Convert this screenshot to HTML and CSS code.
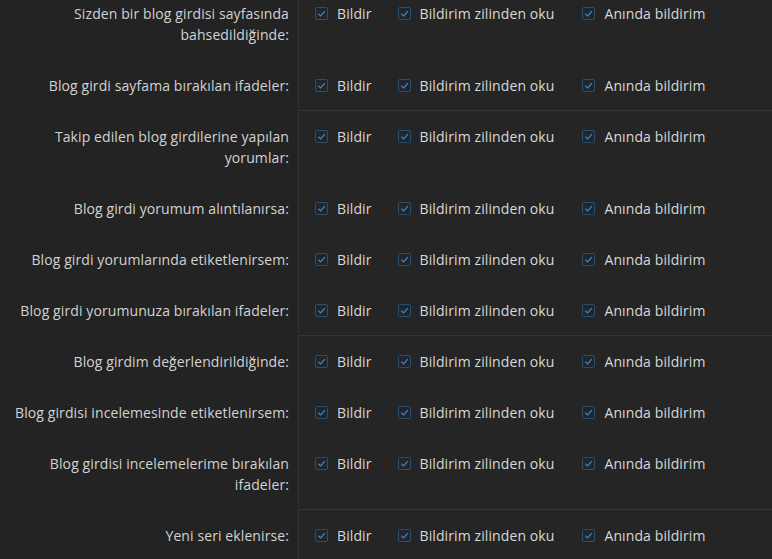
FILE: index.html
```html
<!DOCTYPE html>
<html lang="tr">
<head>
<meta charset="utf-8">
<link rel="stylesheet" href="styles.css">
</head>
<body>
<div class="form">
  <div class="group">
    <div class="row"><div class="label">Sizden bir blog girdisi sayfasında bahsedildiğinde:</div><div class="opts"><span class="opt"><svg class="cb" viewBox="0 0 14 14"><rect x="0.5" y="0.5" width="13" height="13" rx="1.5"/><path d="M3.5 7.2 L6 9.6 L10.6 4.4"/></svg>Bildir</span><span class="opt"><svg class="cb" viewBox="0 0 14 14"><rect x="0.5" y="0.5" width="13" height="13" rx="1.5"/><path d="M3.5 7.2 L6 9.6 L10.6 4.4"/></svg>Bildirim zilinden oku</span><span class="opt"><svg class="cb" viewBox="0 0 14 14"><rect x="0.5" y="0.5" width="13" height="13" rx="1.5"/><path d="M3.5 7.2 L6 9.6 L10.6 4.4"/></svg>Anında bildirim</span></div></div>
    <div class="row"><div class="label">Blog girdi sayfama bırakılan ifadeler:</div><div class="opts"><span class="opt"><svg class="cb" viewBox="0 0 14 14"><rect x="0.5" y="0.5" width="13" height="13" rx="1.5"/><path d="M3.5 7.2 L6 9.6 L10.6 4.4"/></svg>Bildir</span><span class="opt"><svg class="cb" viewBox="0 0 14 14"><rect x="0.5" y="0.5" width="13" height="13" rx="1.5"/><path d="M3.5 7.2 L6 9.6 L10.6 4.4"/></svg>Bildirim zilinden oku</span><span class="opt"><svg class="cb" viewBox="0 0 14 14"><rect x="0.5" y="0.5" width="13" height="13" rx="1.5"/><path d="M3.5 7.2 L6 9.6 L10.6 4.4"/></svg>Anında bildirim</span></div></div>
  </div>
  <div class="group">
    <div class="row"><div class="label">Takip edilen blog girdilerine yapılan yorumlar:</div><div class="opts"><span class="opt"><svg class="cb" viewBox="0 0 14 14"><rect x="0.5" y="0.5" width="13" height="13" rx="1.5"/><path d="M3.5 7.2 L6 9.6 L10.6 4.4"/></svg>Bildir</span><span class="opt"><svg class="cb" viewBox="0 0 14 14"><rect x="0.5" y="0.5" width="13" height="13" rx="1.5"/><path d="M3.5 7.2 L6 9.6 L10.6 4.4"/></svg>Bildirim zilinden oku</span><span class="opt"><svg class="cb" viewBox="0 0 14 14"><rect x="0.5" y="0.5" width="13" height="13" rx="1.5"/><path d="M3.5 7.2 L6 9.6 L10.6 4.4"/></svg>Anında bildirim</span></div></div>
    <div class="row"><div class="label">Blog girdi yorumum alıntılanırsa:</div><div class="opts"><span class="opt"><svg class="cb" viewBox="0 0 14 14"><rect x="0.5" y="0.5" width="13" height="13" rx="1.5"/><path d="M3.5 7.2 L6 9.6 L10.6 4.4"/></svg>Bildir</span><span class="opt"><svg class="cb" viewBox="0 0 14 14"><rect x="0.5" y="0.5" width="13" height="13" rx="1.5"/><path d="M3.5 7.2 L6 9.6 L10.6 4.4"/></svg>Bildirim zilinden oku</span><span class="opt"><svg class="cb" viewBox="0 0 14 14"><rect x="0.5" y="0.5" width="13" height="13" rx="1.5"/><path d="M3.5 7.2 L6 9.6 L10.6 4.4"/></svg>Anında bildirim</span></div></div>
    <div class="row"><div class="label">Blog girdi yorumlarında etiketlenirsem:</div><div class="opts"><span class="opt"><svg class="cb" viewBox="0 0 14 14"><rect x="0.5" y="0.5" width="13" height="13" rx="1.5"/><path d="M3.5 7.2 L6 9.6 L10.6 4.4"/></svg>Bildir</span><span class="opt"><svg class="cb" viewBox="0 0 14 14"><rect x="0.5" y="0.5" width="13" height="13" rx="1.5"/><path d="M3.5 7.2 L6 9.6 L10.6 4.4"/></svg>Bildirim zilinden oku</span><span class="opt"><svg class="cb" viewBox="0 0 14 14"><rect x="0.5" y="0.5" width="13" height="13" rx="1.5"/><path d="M3.5 7.2 L6 9.6 L10.6 4.4"/></svg>Anında bildirim</span></div></div>
    <div class="row"><div class="label">Blog girdi yorumunuza bırakılan ifadeler:</div><div class="opts"><span class="opt"><svg class="cb" viewBox="0 0 14 14"><rect x="0.5" y="0.5" width="13" height="13" rx="1.5"/><path d="M3.5 7.2 L6 9.6 L10.6 4.4"/></svg>Bildir</span><span class="opt"><svg class="cb" viewBox="0 0 14 14"><rect x="0.5" y="0.5" width="13" height="13" rx="1.5"/><path d="M3.5 7.2 L6 9.6 L10.6 4.4"/></svg>Bildirim zilinden oku</span><span class="opt"><svg class="cb" viewBox="0 0 14 14"><rect x="0.5" y="0.5" width="13" height="13" rx="1.5"/><path d="M3.5 7.2 L6 9.6 L10.6 4.4"/></svg>Anında bildirim</span></div></div>
  </div>
  <div class="group">
    <div class="row"><div class="label">Blog girdim değerlendirildiğinde:</div><div class="opts"><span class="opt"><svg class="cb" viewBox="0 0 14 14"><rect x="0.5" y="0.5" width="13" height="13" rx="1.5"/><path d="M3.5 7.2 L6 9.6 L10.6 4.4"/></svg>Bildir</span><span class="opt"><svg class="cb" viewBox="0 0 14 14"><rect x="0.5" y="0.5" width="13" height="13" rx="1.5"/><path d="M3.5 7.2 L6 9.6 L10.6 4.4"/></svg>Bildirim zilinden oku</span><span class="opt"><svg class="cb" viewBox="0 0 14 14"><rect x="0.5" y="0.5" width="13" height="13" rx="1.5"/><path d="M3.5 7.2 L6 9.6 L10.6 4.4"/></svg>Anında bildirim</span></div></div>
    <div class="row"><div class="label">Blog girdisi incelemesinde etiketlenirsem:</div><div class="opts"><span class="opt"><svg class="cb" viewBox="0 0 14 14"><rect x="0.5" y="0.5" width="13" height="13" rx="1.5"/><path d="M3.5 7.2 L6 9.6 L10.6 4.4"/></svg>Bildir</span><span class="opt"><svg class="cb" viewBox="0 0 14 14"><rect x="0.5" y="0.5" width="13" height="13" rx="1.5"/><path d="M3.5 7.2 L6 9.6 L10.6 4.4"/></svg>Bildirim zilinden oku</span><span class="opt"><svg class="cb" viewBox="0 0 14 14"><rect x="0.5" y="0.5" width="13" height="13" rx="1.5"/><path d="M3.5 7.2 L6 9.6 L10.6 4.4"/></svg>Anında bildirim</span></div></div>
    <div class="row"><div class="label">Blog girdisi incelemelerime bırakılan ifadeler:</div><div class="opts"><span class="opt"><svg class="cb" viewBox="0 0 14 14"><rect x="0.5" y="0.5" width="13" height="13" rx="1.5"/><path d="M3.5 7.2 L6 9.6 L10.6 4.4"/></svg>Bildir</span><span class="opt"><svg class="cb" viewBox="0 0 14 14"><rect x="0.5" y="0.5" width="13" height="13" rx="1.5"/><path d="M3.5 7.2 L6 9.6 L10.6 4.4"/></svg>Bildirim zilinden oku</span><span class="opt"><svg class="cb" viewBox="0 0 14 14"><rect x="0.5" y="0.5" width="13" height="13" rx="1.5"/><path d="M3.5 7.2 L6 9.6 L10.6 4.4"/></svg>Anında bildirim</span></div></div>
  </div>
  <div class="group">
    <div class="row"><div class="label">Yeni seri eklenirse:</div><div class="opts"><span class="opt"><svg class="cb" viewBox="0 0 14 14"><rect x="0.5" y="0.5" width="13" height="13" rx="1.5"/><path d="M3.5 7.2 L6 9.6 L10.6 4.4"/></svg>Bildir</span><span class="opt"><svg class="cb" viewBox="0 0 14 14"><rect x="0.5" y="0.5" width="13" height="13" rx="1.5"/><path d="M3.5 7.2 L6 9.6 L10.6 4.4"/></svg>Bildirim zilinden oku</span><span class="opt"><svg class="cb" viewBox="0 0 14 14"><rect x="0.5" y="0.5" width="13" height="13" rx="1.5"/><path d="M3.5 7.2 L6 9.6 L10.6 4.4"/></svg>Anında bildirim</span></div></div>
  </div>
</div>
</body>
</html>
```
FILE: styles.css
```css
html, body {
  margin: 0;
  padding: 0;
  background: #232323;
  height: 100%;
  overflow: hidden;
}
body {
  font-family: "Open Sans", "Noto Sans", sans-serif;
  font-size: 14px;
  line-height: 21px;
  letter-spacing: 0.1px;
}
.form {
  margin-top: -12px;
}
.row {
  display: flex;
}
.label {
  width: 280px;
  flex: none;
  padding: 15px 9px 15px 9px;
  text-align: right;
  color: #d2d2d2;
  border-right: 1px solid #333;
}
.opts {
  flex: 1;
  display: flex;
  align-items: flex-start;
  padding: 15px 0 15px 16px;
  background: #252525;
  color: #d8d8d8;
}
.group .row:last-child .opts {
  padding-bottom: 14px;
  border-bottom: 1px solid #363636;
}
.group:last-child .row:last-child .opts {
  padding-bottom: 15px;
  border-bottom: none;
}
.opt {
  display: flex;
  align-items: center;
  margin-right: 26px;
  white-space: nowrap;
}
.opt:nth-child(2) {
  margin-right: 28px;
}
.cb {
  width: 13px;
  height: 13px;
  margin-right: 9px;
  flex: none;
}
.cb rect {
  fill: #1e2730;
  stroke: #2d5472;
  stroke-width: 1;
}
.cb path {
  fill: none;
  stroke: #4c87b2;
  stroke-width: 1.3;
}
```
